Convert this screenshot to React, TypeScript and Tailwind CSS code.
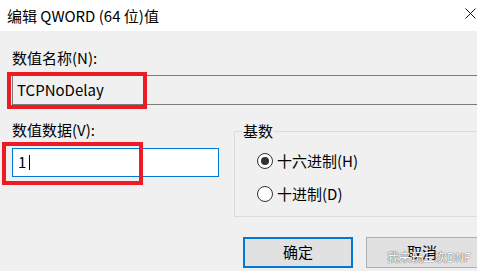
export default function App() {
  return (
    <div className="relative w-[477px] h-[271px] overflow-hidden bg-[#f0f0f0] text-[15px] text-black font-['Noto_Sans_CJK_SC',sans-serif]">
      {/* title bar */}
      <div className="h-[31px] bg-white flex items-start justify-between pl-[7px] pr-[1px]">
        <span className="leading-[31px]">编辑 QWORD (64 位)值</span>
        <svg className="mt-[8px]" width="11" height="11" viewBox="0 0 11 11">
          <path d="M0.5 0.5L10.5 10.5M10.5 0.5L0.5 10.5" stroke="#111" strokeWidth="1" />
        </svg>
      </div>

      <div className="px-[12px]">
        <div className="mt-[17px] leading-[20px]">数值名称(N):</div>
        <div className="mt-[7px] h-[30px] w-[480px] border border-[#7a7a7a] flex items-center pl-[4px]">
          TCPNoDelay
        </div>

        <div className="mt-[15px] flex gap-[15px]">
          <div className="w-[207px] shrink-0">
            <div className="leading-[20px]">数值数据(V):</div>
            <div className="mt-[8px] h-[29px] border border-[#0078d7] bg-white flex items-center pl-[5px]">
              <span>1</span>
              <span className="ml-[3px] w-[1px] h-[15px] bg-black" />
            </div>
          </div>

          <fieldset className="mt-[1px] w-[260px] h-[96px] shrink-0 border border-[#dcdcdc]">
            <legend className="ml-[7px] px-[1px] leading-[20px]">基数</legend>
            <div className="pl-[22px] mt-[10px] flex flex-col gap-[13px]">
              <label className="flex items-center gap-[4px] leading-[20px]">
                <span className="w-[16px] h-[16px] rounded-full border border-[#333] bg-white flex items-center justify-center">
                  <span className="w-[8px] h-[8px] rounded-full bg-[#333]" />
                </span>
                十六进制(H)
              </label>
              <label className="flex items-center gap-[4px] leading-[20px]">
                <span className="w-[16px] h-[16px] rounded-full border border-[#333] bg-white" />
                十进制(D)
              </label>
            </div>
          </fieldset>
        </div>

        <div className="mt-[20px] pl-[231px] flex gap-[13px]">
          <button className="w-[110px] h-[31px] shrink-0 bg-[#e1e1e1] border-2 border-[#0078d7]">确定</button>
          <button className="w-[112px] h-[31px] shrink-0 bg-[#e1e1e1] border border-[#adadad]">取消</button>
        </div>
      </div>

      {/* red annotation boxes */}
      <div className="absolute left-[7px] top-[72px] w-[140px] h-[37px] border-4 border-[#ed1c24]" />
      <div className="absolute left-[2px] top-[142px] w-[141px] h-[43px] border-4 border-[#ed1c24]" />

      {/* watermark */}
      <div className="absolute left-[387px] top-[249px] whitespace-nowrap text-[12px] leading-[15px] text-white [text-shadow:0_0_1px_#555,0_0_1px_#555]">
        我来玩三次DNF
      </div>
    </div>
  );
}
